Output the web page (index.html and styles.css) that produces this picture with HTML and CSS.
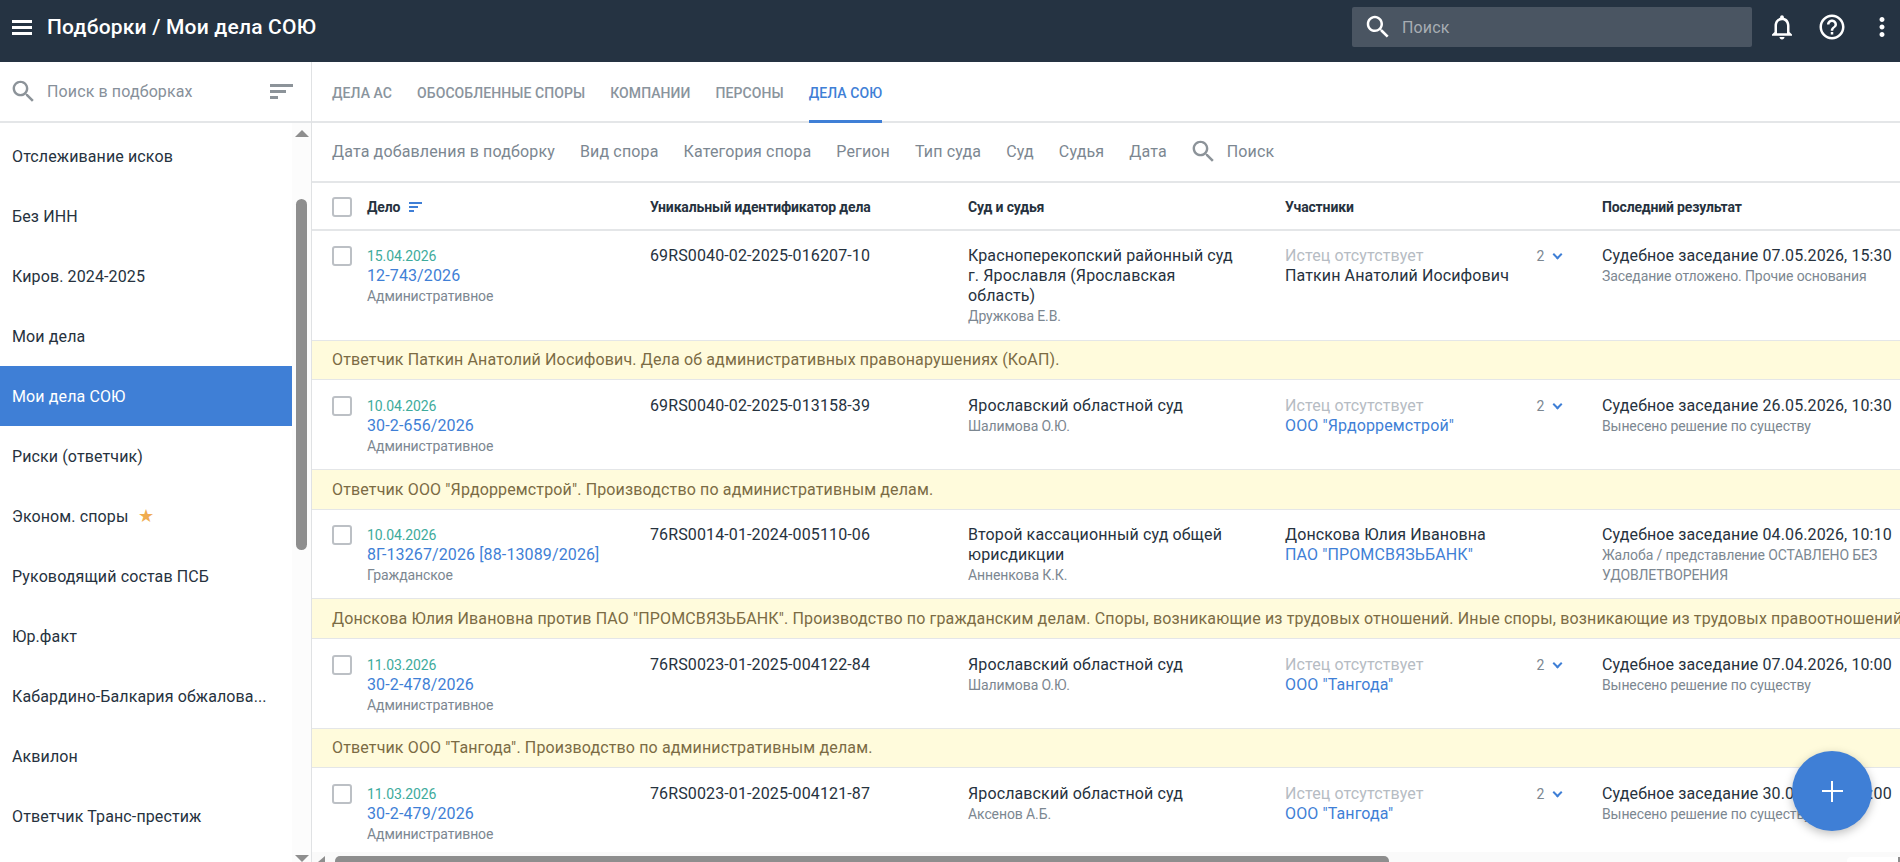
FILE: index.html
```html
<!DOCTYPE html>
<html lang="ru">
<head>
    <meta charset="UTF-8">
    <title>Подборки / Мои дела СОЮ</title>
    <link rel="stylesheet" href="styles.css">
</head>
<body>
    <header class="topbar">
        <div class="burger"><span></span><span></span><span></span></div>
        <div class="page-title">Подборки / Мои дела СОЮ</div>
        <div class="top-search">
            <svg class="top-search-icon" viewBox="0 0 24 24"><path d="M15.5 14h-.79l-.28-.27C15.41 12.59 16 11.11 16 9.5 16 5.91 13.09 3 9.5 3S3 5.91 3 9.5 5.91 16 9.5 16c1.61 0 3.09-.59 4.23-1.57l.27.28v.79l5 4.99L20.49 19l-4.99-5zm-6 0C7.01 14 5 11.99 5 9.5S7.01 5 9.5 5 14 7.01 14 9.5 11.99 14 9.5 14z"/></svg>
            <span>Поиск</span>
        </div>
        <svg class="top-icon" viewBox="0 0 24 24"><path d="M12 22c1.1 0 2-.9 2-2h-4c0 1.1.9 2 2 2zm6-6v-5c0-3.07-1.63-5.64-4.5-6.32V4c0-.83-.67-1.5-1.5-1.5s-1.5.67-1.5 1.5v.68C7.64 5.36 6 7.92 6 11v5l-2 2v1h16v-1l-2-2zm-2 1H8v-6c0-2.48 1.51-4.5 4-4.5s4 2.02 4 4.5v6z"/></svg>
        <svg class="top-icon" viewBox="0 0 24 24"><path d="M11 18h2v-2h-2v2zm1-16C6.48 2 2 6.48 2 12s4.48 10 10 10 10-4.48 10-10S17.52 2 12 2zm0 18c-4.41 0-8-3.59-8-8s3.59-8 8-8 8 3.59 8 8-3.59 8-8 8zm0-14c-2.21 0-4 1.79-4 4h2c0-1.1.9-2 2-2s2 .9 2 2c0 2-3 1.75-3 5h2c0-2.25 3-2.5 3-5 0-2.21-1.79-4-4-4z"/></svg>
        <svg class="top-icon" viewBox="0 0 24 24"><path d="M12 8c1.1 0 2-.9 2-2s-.9-2-2-2-2 .9-2 2 .9 2 2 2zm0 2c-1.1 0-2 .9-2 2s.9 2 2 2 2-.9 2-2-.9-2-2-2zm0 6c-1.1 0-2 .9-2 2s.9 2 2 2 2-.9 2-2-.9-2-2-2z"/></svg>
    </header>

    <div class="layout">
        <aside class="sidebar">
            <div class="side-search">
                <svg class="gray-search" viewBox="0 0 24 24"><path d="M15.5 14h-.79l-.28-.27C15.41 12.59 16 11.11 16 9.5 16 5.91 13.09 3 9.5 3S3 5.91 3 9.5 5.91 16 9.5 16c1.61 0 3.09-.59 4.23-1.57l.27.28v.79l5 4.99L20.49 19l-4.99-5zm-6 0C7.01 14 5 11.99 5 9.5S7.01 5 9.5 5 14 7.01 14 9.5 11.99 14 9.5 14z"/></svg>
                <span class="side-search-text">Поиск в подборках</span>
                <div class="bars-big"><span></span><span></span><span></span></div>
            </div>
            <div class="side-body">
                <ul class="side-list">
                    <li>Отслеживание исков</li>
                    <li>Без ИНН</li>
                    <li>Киров. 2024-2025</li>
                    <li>Мои дела</li>
                    <li class="active">Мои дела СОЮ</li>
                    <li>Риски (ответчик)</li>
                    <li>Эконом. споры <span class="star">★</span></li>
                    <li>Руководящий состав ПСБ</li>
                    <li>Юр.факт</li>
                    <li>Кабардино-Балкария обжалова...</li>
                    <li>Аквилон</li>
                    <li>Ответчик Транс-престиж</li>
                </ul>
                <div class="side-scroll">
                    <div class="arrow-up"></div>
                    <div class="side-thumb"></div>
                    <div class="arrow-down"></div>
                </div>
            </div>
        </aside>

        <main class="content">
            <nav class="tabs">
                <a class="tab">Дела АС</a>
                <a class="tab">Обособленные споры</a>
                <a class="tab">Компании</a>
                <a class="tab">Персоны</a>
                <a class="tab tab-active">Дела СОЮ</a>
            </nav>
            <div class="filters">
                <span>Дата добавления в подборку</span>
                <span>Вид спора</span>
                <span>Категория спора</span>
                <span>Регион</span>
                <span>Тип суда</span>
                <span>Суд</span>
                <span>Судья</span>
                <span>Дата</span>
                <span class="filter-search">
                    <svg class="gray-search" viewBox="0 0 24 24"><path d="M15.5 14h-.79l-.28-.27C15.41 12.59 16 11.11 16 9.5 16 5.91 13.09 3 9.5 3S3 5.91 3 9.5 5.91 16 9.5 16c1.61 0 3.09-.59 4.23-1.57l.27.28v.79l5 4.99L20.49 19l-4.99-5zm-6 0C7.01 14 5 11.99 5 9.5S7.01 5 9.5 5 14 7.01 14 9.5 11.99 14 9.5 14z"/></svg>
                    Поиск
                </span>
            </div>

            <div class="table">
                <div class="thead">
                    <div class="case-col">
                        <span class="check"></span>
                        <span>Дело</span>
                        <div class="bars-small"><span></span><span></span><span></span></div>
                    </div>
                    <div>Уникальный идентификатор дела</div>
                    <div>Суд и судья</div>
                    <div>Участники</div>
                    <div>Последний результат</div>
                </div>

                <div class="row row-tall">
                    <div class="case-col">
                        <span class="check"></span>
                        <div>
                            <div class="date">15.04.2026</div>
                            <a class="link">12-743/2026</a>
                            <div class="sub">Административное</div>
                        </div>
                    </div>
                    <div>69RS0040-02-2025-016207-10</div>
                    <div class="court">
                        Красноперекопский районный суд г. Ярославля (Ярославская область)
                        <div class="sub">Дружкова Е.В.</div>
                    </div>
                    <div class="parties">
                        <div>
                            <div class="absent">Истец отсутствует</div>
                            <div>Паткин Анатолий Иосифович</div>
                        </div>
                        <div class="count">2 <span class="chevron"></span></div>
                    </div>
                    <div class="result">
                        Судебное заседание 07.05.2026, 15:30
                        <div class="sub">Заседание отложено. Прочие основания</div>
                    </div>
                </div>
                <div class="note">Ответчик Паткин Анатолий Иосифович. Дела об административных правонарушениях (КоАП).</div>

                <div class="row">
                    <div class="case-col">
                        <span class="check"></span>
                        <div>
                            <div class="date">10.04.2026</div>
                            <a class="link">30-2-656/2026</a>
                            <div class="sub">Административное</div>
                        </div>
                    </div>
                    <div>69RS0040-02-2025-013158-39</div>
                    <div class="court">
                        Ярославский областной суд
                        <div class="sub">Шалимова О.Ю.</div>
                    </div>
                    <div class="parties">
                        <div>
                            <div class="absent">Истец отсутствует</div>
                            <a class="link">ООО "Ярдорремстрой"</a>
                        </div>
                        <div class="count">2 <span class="chevron"></span></div>
                    </div>
                    <div class="result">
                        Судебное заседание 26.05.2026, 10:30
                        <div class="sub">Вынесено решение по существу</div>
                    </div>
                </div>
                <div class="note">Ответчик ООО "Ярдорремстрой". Производство по административным делам.</div>

                <div class="row">
                    <div class="case-col">
                        <span class="check"></span>
                        <div>
                            <div class="date">10.04.2026</div>
                            <a class="link">8Г-13267/2026 [88-13089/2026]</a>
                            <div class="sub">Гражданское</div>
                        </div>
                    </div>
                    <div>76RS0014-01-2024-005110-06</div>
                    <div class="court">
                        Второй кассационный суд общей юрисдикции
                        <div class="sub">Анненкова К.К.</div>
                    </div>
                    <div class="parties">
                        <div>
                            <div>Донскова Юлия Ивановна</div>
                            <a class="link">ПАО "ПРОМСВЯЗЬБАНК"</a>
                        </div>
                    </div>
                    <div class="result">
                        Судебное заседание 04.06.2026, 10:10
                        <div class="sub">Жалоба / представление ОСТАВЛЕНО БЕЗ УДОВЛЕТВОРЕНИЯ</div>
                    </div>
                </div>
                <div class="note">Донскова Юлия Ивановна против ПАО "ПРОМСВЯЗЬБАНК". Производство по гражданским делам. Споры, возникающие из трудовых отношений. Иные споры, возникающие из трудовых правоотношений</div>

                <div class="row">
                    <div class="case-col">
                        <span class="check"></span>
                        <div>
                            <div class="date">11.03.2026</div>
                            <a class="link">30-2-478/2026</a>
                            <div class="sub">Административное</div>
                        </div>
                    </div>
                    <div>76RS0023-01-2025-004122-84</div>
                    <div class="court">
                        Ярославский областной суд
                        <div class="sub">Шалимова О.Ю.</div>
                    </div>
                    <div class="parties">
                        <div>
                            <div class="absent">Истец отсутствует</div>
                            <a class="link">ООО "Тангода"</a>
                        </div>
                        <div class="count">2 <span class="chevron"></span></div>
                    </div>
                    <div class="result">
                        Судебное заседание 07.04.2026, 10:00
                        <div class="sub">Вынесено решение по существу</div>
                    </div>
                </div>
                <div class="note">Ответчик ООО "Тангода". Производство по административным делам.</div>

                <div class="row">
                    <div class="case-col">
                        <span class="check"></span>
                        <div>
                            <div class="date">11.03.2026</div>
                            <a class="link">30-2-479/2026</a>
                            <div class="sub">Административное</div>
                        </div>
                    </div>
                    <div>76RS0023-01-2025-004121-87</div>
                    <div class="court">
                        Ярославский областной суд
                        <div class="sub">Аксенов А.Б.</div>
                    </div>
                    <div class="parties">
                        <div>
                            <div class="absent">Истец отсутствует</div>
                            <a class="link">ООО "Тангода"</a>
                        </div>
                        <div class="count">2 <span class="chevron"></span></div>
                    </div>
                    <div class="result">
                        Судебное заседание 30.03.2026, 12:00
                        <div class="sub">Вынесено решение по существу</div>
                    </div>
                </div>
            </div>

            <div class="hscroll">
                <div class="arrow-left"></div>
                <div class="hscroll-thumb"></div>
                <div class="hscroll-end"></div>
            </div>
        </main>
    </div>

    <button class="fab"><span class="fab-plus"></span></button>
</body>
</html>
```

FILE: styles.css
```css
* {
    box-sizing: border-box;
}

html, body {
    height: 100%;
}

body {
    margin: 0;
    font-family: Roboto, "Noto Sans", sans-serif;
    font-size: 16px;
    letter-spacing: 0.12px;
    color: #26323e;
    background-color: white;
    overflow: hidden;
}

/* top bar */
.topbar {
    height: 62px;
    padding: 0 3px 8px 12px;
    display: flex;
    align-items: center;
    background-color: #253342;
    color: white;
}

.burger {
    width: 20px;
    display: flex;
    flex-direction: column;
    gap: 3px;
    margin-right: 15px;
}

.burger span {
    height: 3px;
    background-color: white;
}

.page-title {
    font-size: 21px;
    font-weight: 500;
    letter-spacing: 0.2px;
    flex: 1;
}

.top-search {
    width: 400px;
    height: 40px;
    margin-right: 15px;
    padding-left: 11px;
    display: flex;
    align-items: center;
    gap: 9px;
    background-color: #4a5562;
    border-radius: 2px;
    color: #a7adb3;
}

.top-search-icon {
    width: 30px;
    height: 30px;
    fill: white;
}

.top-icon {
    width: 30px;
    height: 30px;
    margin-right: 20px;
    fill: white;
}

.top-icon:last-child {
    margin-right: 0;
}

/* sidebar */
.layout {
    height: 800px;
    display: flex;
}

.sidebar {
    width: 312px;
    flex-shrink: 0;
    display: flex;
    flex-direction: column;
    border-right: 1px solid #e0e2e4;
}

.side-search {
    height: 61px;
    flex-shrink: 0;
    padding: 0 18px 0 9px;
    display: flex;
    align-items: center;
    border-bottom: 2px solid #e4e6e8;
    color: #87909a;
}

.gray-search {
    width: 29px;
    height: 29px;
    fill: #8c9399;
}

.side-search-text {
    flex: 1;
    margin-left: 9px;
}

.bars-big {
    width: 23px;
    display: flex;
    flex-direction: column;
    gap: 3px;
}

.bars-big span {
    height: 3px;
    background-color: #8c9399;
}

.bars-big span:nth-child(1) { width: 23px; }
.bars-big span:nth-child(2) { width: 16px; }
.bars-big span:nth-child(3) { width: 8px; }

.side-body {
    flex: 1;
    min-height: 0;
    display: flex;
}

.side-list {
    width: 292px;
    margin: 0;
    padding: 3px 0 0;
    list-style: none;
    overflow: hidden;
}

.side-list li {
    height: 60px;
    padding-left: 12px;
    display: flex;
    align-items: center;
    gap: 9px;
}

.side-list li.active {
    background-color: #3f7fd6;
    color: white;
}

.star {
    color: #f0ac50;
    font-size: 18px;
    line-height: 1;
}

.side-scroll {
    flex: 1;
    display: flex;
    flex-direction: column;
    align-items: center;
    padding-top: 7px;
    background-color: #fcfcfc;
}

.arrow-up {
    width: 0;
    height: 0;
    border-left: 7px solid transparent;
    border-right: 7px solid transparent;
    border-bottom: 7px solid #8e8e8e;
}

.side-thumb {
    width: 11px;
    height: 351px;
    margin-top: 62px;
    background-color: #8e8e8e;
    border-radius: 6px;
}

.arrow-down {
    width: 0;
    height: 0;
    margin-top: auto;
    border-left: 7px solid transparent;
    border-right: 7px solid transparent;
    border-top: 7px solid #8e8e8e;
}

/* main part */
.content {
    flex: 1;
    min-width: 0;
    display: flex;
    flex-direction: column;
    overflow: hidden;
}

.tabs {
    height: 61px;
    flex-shrink: 0;
    padding-left: 20px;
    display: flex;
    gap: 25px;
    border-bottom: 2px solid #e4e6e8;
}

.tab {
    height: 61px;
    display: flex;
    align-items: center;
    font-size: 14px;
    font-weight: 500;
    letter-spacing: 0.08px;
    text-transform: uppercase;
    color: #8a949d;
}

.tab-active {
    color: #3f7fd6;
    border-bottom: 3px solid #3f7fd6;
    padding-top: 3px;
}

.filters {
    height: 60px;
    flex-shrink: 0;
    padding: 0 0 2px 20px;
    display: flex;
    align-items: center;
    gap: 25px;
    letter-spacing: 0.15px;
    color: #7c8791;
    border-bottom: 2px solid #e4e6e8;
}

.filter-search {
    display: flex;
    align-items: center;
    gap: 9px;
    margin-left: -3px;
}

.table {
    flex: 1;
    min-height: 0;
    overflow: hidden;
}

.thead, .row {
    display: grid;
    grid-template-columns: 338px 318px 317px 317px 317px;
    padding-left: 20px;
    border-bottom: 1px solid #e4e6e8;
}

.thead > div:not(.case-col), .row > div:not(.case-col) {
    margin-left: -20px;
}

.thead {
    height: 48px;
    padding-top: 1px;
    align-items: center;
    font-size: 14px;
    font-weight: 700;
    letter-spacing: -0.15px;
    border-bottom-width: 2px;
}

.row {
    height: 89.7px;
    padding-top: 15.6px;
    line-height: 20px;
}

.row-tall {
    height: 109.5px;
    padding-top: 15px;
}

.case-col {
    display: flex;
    align-items: flex-start;
    gap: 15px;
}

.thead .case-col {
    align-items: center;
}

.check {
    width: 20px;
    height: 20px;
    flex-shrink: 0;
    border: 2px solid #bcc0c5;
    border-radius: 3px;
}

.bars-small {
    width: 13px;
    margin-left: -6px;
    display: flex;
    flex-direction: column;
    gap: 2px;
}

.bars-small span {
    height: 2px;
    background-color: #3f7fd6;
}

.bars-small span:nth-child(1) { width: 13px; }
.bars-small span:nth-child(2) { width: 9px; }
.bars-small span:nth-child(3) { width: 5px; }

.date {
    font-size: 14px;
    letter-spacing: -0.1px;
    color: #3eab9c;
}

.link {
    color: #3f7fd6;
}

.sub {
    font-size: 14px;
    letter-spacing: -0.1px;
    color: #7c8791;
}

.court {
    padding-right: 62px;
}

.parties {
    display: flex;
    justify-content: space-between;
    padding-right: 59px;
}

.absent {
    color: #b6bcc3;
}

.count {
    font-size: 14px;
    color: #7c8791;
}

.chevron {
    display: inline-block;
    width: 7px;
    height: 7px;
    margin: 0 2px 3px 6px;
    border-right: 2px solid #3f7fd6;
    border-bottom: 2px solid #3f7fd6;
    transform: rotate(45deg);
}

.result {
    padding-right: 20px;
}

.note {
    height: 39.7px;
    padding-left: 20px;
    display: flex;
    align-items: center;
    white-space: nowrap;
    letter-spacing: 0.14px;
    background-color: #fffbdc;
    color: #7b6b44;
    border-bottom: 1px solid #e4e6e8;
}

/* bottom scrollbar */
.hscroll {
    height: 10px;
    flex-shrink: 0;
    padding: 4px 0 0 6px;
    display: flex;
    align-items: flex-start;
    background-color: #fafafa;
}

.arrow-left {
    width: 0;
    height: 0;
    border-top: 6px solid transparent;
    border-right: 7px solid #8e8e8e;
}

.hscroll-thumb {
    width: 1054px;
    height: 10px;
    margin-left: 10px;
    background-color: #8e8e8e;
    border-radius: 6px;
}

.hscroll-end {
    width: 53px;
    height: 10px;
    margin-left: auto;
    margin-top: 1px;
    background-color: white;
    border-radius: 4px 0 0 0;
    border-right: 2px solid #8e8e8e;
}

.fab {
    position: absolute;
    left: 1792px;
    top: 751px;
    width: 80px;
    height: 80px;
    padding: 0;
    border: none;
    border-radius: 50%;
    background-color: #3f7fd6;
    box-shadow: 0 3px 10px rgba(0, 0, 0, 0.25);
    display: flex;
    align-items: center;
    justify-content: center;
}

.fab-plus {
    position: relative;
    width: 21px;
    height: 2px;
    background-color: white;
}

.fab-plus::after {
    content: "";
    position: absolute;
    left: 9.5px;
    top: -9.5px;
    width: 2px;
    height: 21px;
    background-color: white;
}
```
